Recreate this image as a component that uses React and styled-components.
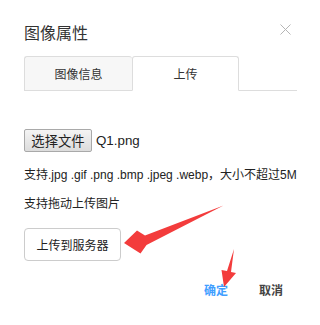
import React from 'react';
import styled, {createGlobalStyle} from 'styled-components';

const GlobalStyle = createGlobalStyle`
  html, body {
    margin: 0;
    padding: 0;
    background: #fff;
  }
  body {
    font-family: "Liberation Sans", "Noto Sans CJK SC", sans-serif;
    color: #333;
  }
`;

const Dialog = styled.div`
  position: relative;
  box-sizing: border-box;
  width: 320px;
  height: 325px;
  padding: 23px 23px 0 24px;
  background: #fff;
`;

const Header = styled.div`
  display: flex;
  justify-content: space-between;
  align-items: flex-start;
  height: 22px;
  margin-bottom: 11px;
`;

const Title = styled.h3`
  margin: 0;
  font-size: 16px;
  line-height: 22px;
  font-weight: normal;
  color: #333;
`;

const Close = styled.button`
  display: flex;
  padding: 0;
  margin: 1px 6px 0 0;
  border: 0;
  background: none;
  cursor: pointer;
`;

const TabList = styled.div`
  display: flex;
  border-bottom: 1px solid #ddd;
`;

const Tab = styled.div`
  box-sizing: border-box;
  width: ${p => p.$width}px;
  height: 34px;
  margin-bottom: ${p => (p.$active ? '-1px' : '0')};
  display: flex;
  align-items: center;
  justify-content: center;
  font-size: 12px;
  color: #333;
  background: ${p => (p.$active ? '#fff' : '#f7f7f7')};
  border: 1px solid #ddd;
  border-right: ${p => (p.$active ? '1px solid #ddd' : '0')};
  border-bottom: ${p => (p.$active ? '1px solid #fff' : '0')};
  border-radius: 3px 3px 0 0;
  ${p => p.$active && 'height: 35px;'}
`;

const Panel = styled.div`
  display: flex;
  flex-direction: column;
  align-items: flex-start;
  padding-top: 38px;
`;

const FileRow = styled.div`
  display: flex;
  align-items: center;
  height: 23px;
`;

const FileButton = styled.button`
  box-sizing: border-box;
  height: 23px;
  min-width: 68px;
  padding: 0 6px;
  font-family: "Liberation Sans", "Noto Sans CJK SC", sans-serif;
  font-size: 13.33px;
  color: #222;
  border: 1px solid #a9a9a9;
  border-radius: 2px;
  background: linear-gradient(#f4f4f4, #dcdcdc);
`;

const FileName = styled.span`
  margin-left: 4px;
  font-size: 13.33px;
  color: #222;
`;

const Hint = styled.p`
  margin: ${p => p.$top}px 0 0;
  font-size: 12px;
  line-height: 18px;
  color: #222;
  white-space: nowrap;
`;

const UploadButton = styled.button`
  box-sizing: border-box;
  height: 33px;
  margin-top: 15px;
  padding: 0 11.5px;
  font-family: "Liberation Sans", "Noto Sans CJK SC", sans-serif;
  font-size: 12px;
  color: #222;
  background: #fff;
  border: 1px solid #ccc;
  border-radius: 4px;
`;

const Footer = styled.div`
  display: flex;
  justify-content: flex-end;
  gap: 3px;
  margin-top: 16px;
`;

const FooterButton = styled.button`
  height: 24px;
  padding: 0 14px;
  border: 0;
  background: none;
  font-family: "Liberation Sans", "Noto Sans CJK SC", sans-serif;
  font-size: 12px;
  font-weight: bold;
  color: ${p => (p.$primary ? '#409eff' : '#444')};
`;

const Annotations = styled.svg`
  position: absolute;
  left: 0;
  top: 0;
  pointer-events: none;
`;

function App() {
  return (
    <Dialog>
      <GlobalStyle/>
      <Header>
        <Title>图像属性</Title>
        <Close aria-label="close">
          <svg width="11" height="11" viewBox="0 0 11 11">
            <path d="M0.5 0.5L10.5 10.5M10.5 0.5L0.5 10.5" stroke="#b5b5b5" strokeWidth="1" fill="none"/>
          </svg>
        </Close>
      </Header>
      <TabList>
        <Tab $width={108}>图像信息</Tab>
        <Tab $width={107} $active>上传</Tab>
      </TabList>
      <Panel>
        <FileRow>
          <FileButton>选择文件</FileButton>
          <FileName>Q1.png</FileName>
        </FileRow>
        <Hint $top={14}>支持.jpg .gif .png .bmp .jpeg .webp，大小不超过5M</Hint>
        <Hint $top={11}>支持拖动上传图片</Hint>
        <UploadButton>上传到服务器</UploadButton>
      </Panel>
      <Footer>
        <FooterButton $primary>确定</FooterButton>
        <FooterButton>取消</FooterButton>
      </Footer>
      <Annotations width="320" height="325" viewBox="0 0 320 325">
        <polygon points="124,243 137,230.5 145,235.5 223.5,205.5 146.5,245 140.5,253.5" fill="#f33c3c"/>
        <polygon points="234,249 231,272 236,273 224,287 221.5,270 227,271" fill="#f33c3c"/>
      </Annotations>
    </Dialog>
  );
}

export default App;
